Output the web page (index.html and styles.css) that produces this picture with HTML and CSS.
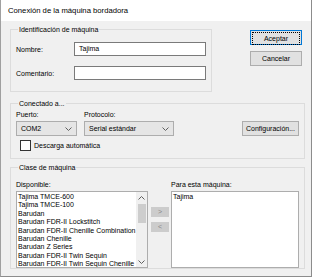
FILE: index.html
```html
<!DOCTYPE html>
<html lang="es">
<head>
    <meta charset="UTF-8">
    <title>Conexión de la máquina bordadora</title>
    <link rel="stylesheet" href="styles.css">
</head>
<body>
    <div class="window">
        <div class="titlebar">Conexión de la máquina bordadora</div>

        <div class="client">
            <!-- Identificación -->
            <div class="top-row">
                <fieldset class="group ident">
                    <legend>Identificación de máquina</legend>
                    <div class="field-row">
                        <label>Nombre:</label>
                        <div class="textbox">Tajima</div>
                    </div>
                    <div class="field-row">
                        <label>Comentario:</label>
                        <div class="textbox"></div>
                    </div>
                </fieldset>
                <div class="dialog-buttons">
                    <button class="btn default"><span>Aceptar</span></button>
                    <button class="btn">Cancelar</button>
                </div>
            </div>

            <!-- Conectado a -->
            <fieldset class="group conn">
                <legend>Conectado a...</legend>
                <div class="conn-row">
                    <div class="col puerto">
                        <label>Puerto:</label>
                        <div class="combo">
                            <span>COM2</span>
                            <svg class="chev" width="7" height="4" viewBox="0 0 7 4"><path d="M0.5 0.5 L3.5 3.5 L6.5 0.5" fill="none" stroke="#606060"/></svg>
                        </div>
                    </div>
                    <div class="col proto">
                        <label>Protocolo:</label>
                        <div class="combo">
                            <span>Serial estándar</span>
                            <svg class="chev" width="7" height="4" viewBox="0 0 7 4"><path d="M0.5 0.5 L3.5 3.5 L6.5 0.5" fill="none" stroke="#606060"/></svg>
                        </div>
                    </div>
                    <button class="btn config">Configuración...</button>
                </div>
                <div class="check-row">
                    <span class="checkbox"></span>
                    <span>Descarga automática</span>
                </div>
            </fieldset>

            <!-- Clase de máquina -->
            <fieldset class="group clase">
                <legend>Clase de máquina</legend>
                <div class="lists">
                    <div class="col avail">
                        <label>Disponible:</label>
                        <div class="listbox">
                            <ul>
                                <li>Tajima TMCE-600</li>
                                <li>Tajima TMCE-100</li>
                                <li>Barudan</li>
                                <li>Barudan FDR-II Lockstitch</li>
                                <li>Barudan FDR-II Chenille Combination</li>
                                <li>Barudan Chenille</li>
                                <li>Barudan Z Series</li>
                                <li>Barudan FDR-II Twin Sequin</li>
                                <li>Barudan FDR-II Twin Sequin Chenille Combination</li>
                            </ul>
                            <div class="scrollbar">
                                <svg class="sarrow" width="7" height="4" viewBox="0 0 7 4"><path d="M0.5 3.5 L3.5 0.5 L6.5 3.5" fill="none" stroke="#606060"/></svg>
                                <span class="thumb"></span>
                                <svg class="sarrow bottom" width="7" height="4" viewBox="0 0 7 4"><path d="M0.5 0.5 L3.5 3.5 L6.5 0.5" fill="none" stroke="#606060"/></svg>
                            </div>
                        </div>
                    </div>
                    <div class="move-buttons">
                        <button class="btn small">&gt;</button>
                        <button class="btn small">&lt;</button>
                    </div>
                    <div class="col chosen">
                        <label>Para esta máquina:</label>
                        <div class="listbox">
                            <ul>
                                <li>Tajima</li>
                            </ul>
                        </div>
                    </div>
                </div>
            </fieldset>
        </div>
    </div>
</body>
</html>
```
FILE: styles.css
```css
body {
    margin: 0;
    background: #ffffff;
    font-family: 'Liberation Sans', Arial, sans-serif;
    font-size: 7px;
    color: #000;
}

.window {
    width: 310px;
    height: 276px;
    border: 1px solid #8c8c8c;
    border-top: none;
    border-left-color: #a0a0a0;
    background: #f0f0f0;
    display: flex;
    flex-direction: column;
}

.titlebar {
    height: 21px;
    line-height: 22px;
    background: #fff;
    padding-left: 7px;
    font-size: 7.7px;
    flex-shrink: 0;
}

.client {
    padding: 5px 6px 0 9px;
    display: flex;
    flex-direction: column;
}

.group {
    border: 1px solid #dcdcdc;
    margin: 0;
    padding: 0 5px;
    min-width: 0;
}

.group legend {
    padding: 0 1px;
    margin-left: 2px;
    color: #000;
}

label {
    display: block;
}

.top-row {
    display: flex;
    align-items: flex-start;
}

.ident {
    width: 190px;
    height: 55px;
    padding-top: 9px;
}

.field-row {
    display: flex;
    align-items: center;
    margin-bottom: 10px;
}

.field-row label {
    width: 58px;
}

.textbox {
    flex: 1;
    height: 12px;
    border: 1px solid #7a7a7a;
    background: #fff;
    padding: 0 4px;
    line-height: 11px;
}

.dialog-buttons {
    margin-left: auto;
    margin-right: 3px;
    display: flex;
    flex-direction: column;
    gap: 6px;
    padding-top: 4px;
}

.btn {
    font-family: inherit;
    font-size: 7px;
    background: #e1e1e1;
    border: 1px solid #adadad;
    height: 15px;
    width: 52px;
    padding: 0;
    color: #000;
}

.btn.default {
    border: 1px solid #0078d7;
    padding: 1px;
}

.btn.default span {
    display: block;
    height: 11px;
    line-height: 11px;
    border: 1px dotted #000;
}

.conn {
    margin-top: 8px;
    height: 57px;
}

.conn-row {
    display: flex;
    align-items: flex-end;
    gap: 7px;
    margin-top: 4px;
}

.col label {
    margin-bottom: 3px;
}

.combo {
    height: 13px;
    border: 1px solid #adadad;
    background: #e5e5e5;
    display: flex;
    align-items: center;
    justify-content: space-between;
    padding: 0 4px 0 4px;
}

.puerto .combo {
    width: 51px;
}

.proto .combo {
    width: 80px;
}

.btn.config {
    margin-left: auto;
    width: 57px;
    height: 15px;
}

.check-row {
    display: flex;
    align-items: center;
    gap: 3px;
    margin-top: 4px;
    margin-left: 4px;
}

.checkbox {
    width: 9px;
    height: 9px;
    border: 1px solid #333;
    background: #fff;
}

.clase {
    margin-top: 5px;
    height: 103px;
}

.lists {
    display: flex;
    margin-top: 10px;
}

.avail .listbox {
    width: 130px;
}

.chosen {
    margin-left: auto;
}

.chosen .listbox {
    width: 126px;
}

.listbox {
    height: 75px;
    border: 1px solid #adadad;
    background: #fff;
    display: flex;
    overflow: hidden;
}

.listbox ul {
    list-style: none;
    margin: 0;
    padding: 1px 0 0 1px;
    flex: 1;
    overflow: hidden;
    white-space: nowrap;
}

.listbox li {
    height: 8.4px;
    line-height: 8.4px;
}

.scrollbar {
    width: 11px;
    flex-shrink: 0;
    background: #f0f0f0;
    display: flex;
    flex-direction: column;
    align-items: center;
    padding: 4px 0 3px;
}

.sarrow.bottom {
    margin-top: auto;
}

.thumb {
    width: 8px;
    height: 19px;
    margin-top: 4px;
    background: #cdcdcd;
}

.move-buttons {
    display: flex;
    flex-direction: column;
    gap: 5px;
    padding-top: 26px;
    margin-left: 3px;
}

.btn.small {
    width: 18px;
    height: 10px;
    font-size: 7px;
    line-height: 8px;
    border-color: #cccccc;
    background: #cccccc;
    color: #888;
}
```
